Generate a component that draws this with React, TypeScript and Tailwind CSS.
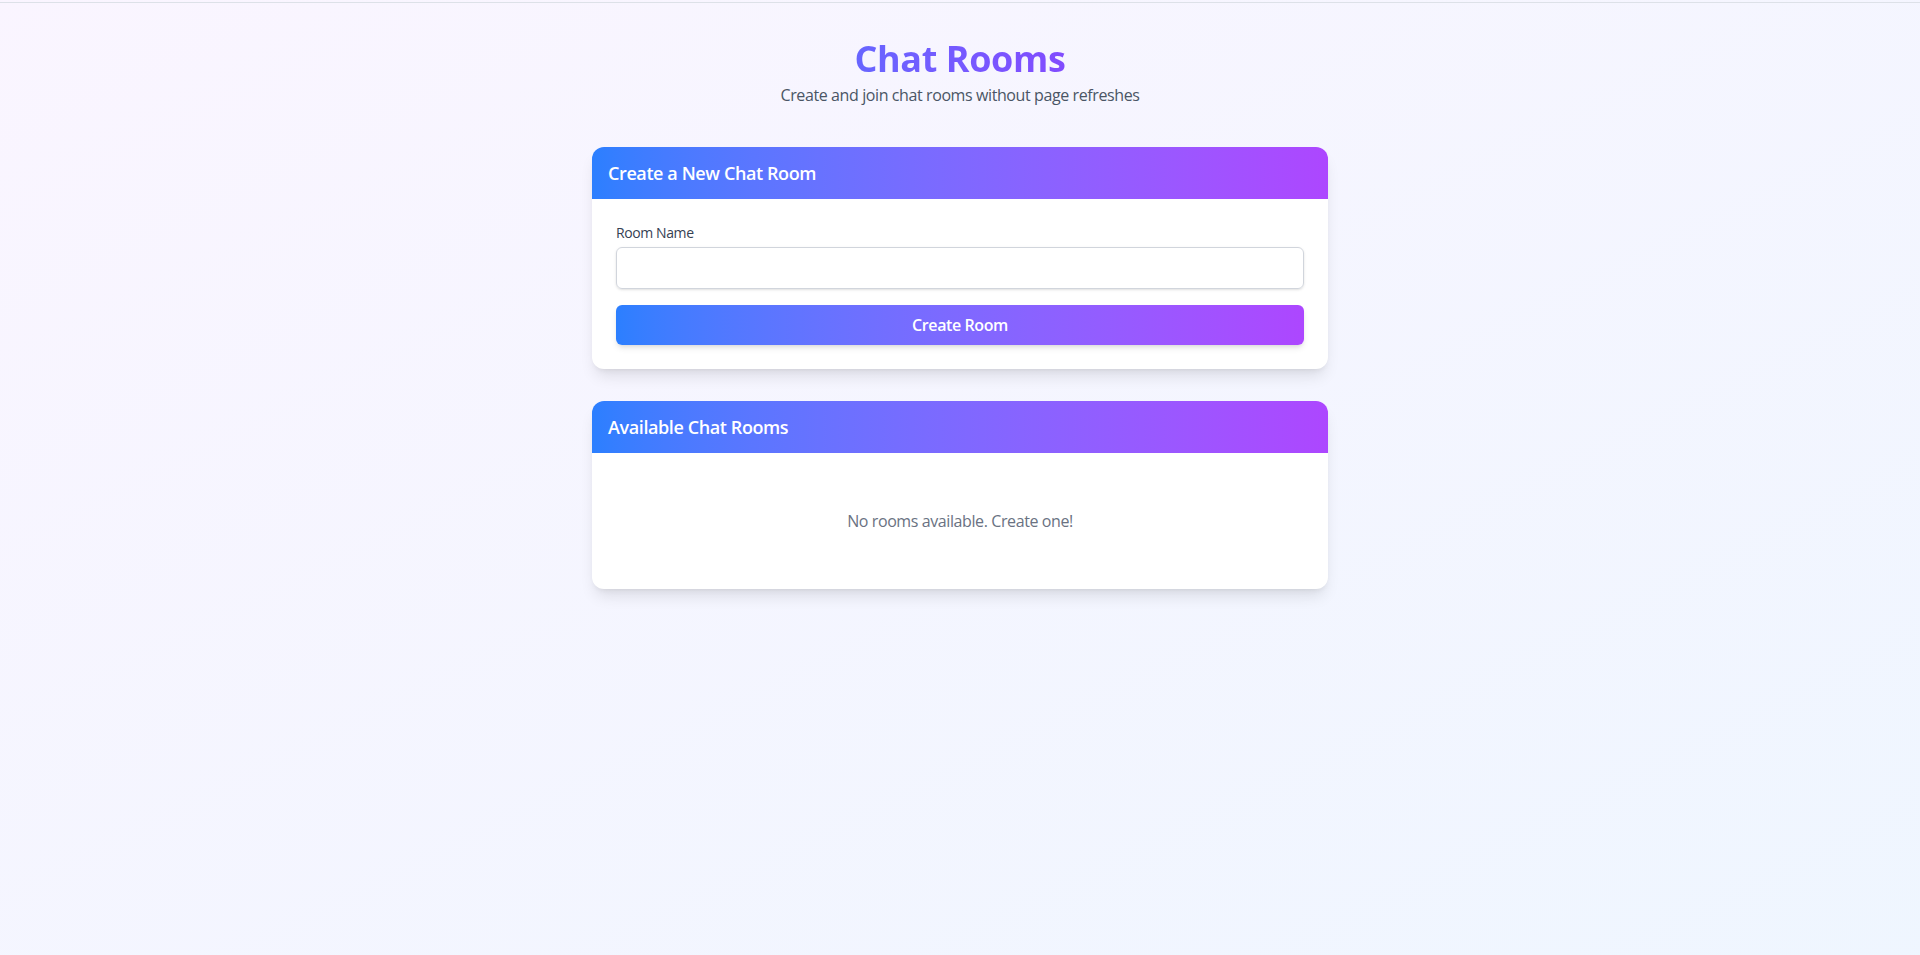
import { useState } from "react";

const font = { fontFamily: '"Segoe UI", "Open Sans", "Noto Sans", sans-serif' };

const Card = ({ title, children }: { title: string; children: React.ReactNode }) => {
    return (
        <div className="bg-white rounded-xl shadow-lg overflow-hidden">
            <div className="bg-gradient-to-r from-blue-500 to-purple-500 px-4 py-3">
                <h2 className="text-lg font-semibold text-white">{title}</h2>
            </div>
            <div className="p-6">{children}</div>
        </div>
    );
};

export default function App() {
    const [roomName, setRoomName] = useState("");

    return (
        <div className="min-h-screen bg-gradient-to-br from-purple-50 to-blue-50 tracking-tight" style={font}>
            <div className="h-[2px]" />
            <div className="h-px bg-[#dde1e8]" />
            <div className="max-w-3xl mx-auto px-4 pt-[36px] pb-8">
                <div className="text-center mb-10">
                    <h1 className="text-4xl font-bold bg-gradient-to-r from-blue-500 to-purple-600 bg-clip-text text-transparent mb-1">
                        Chat Rooms
                    </h1>
                    <p className="text-gray-600">Create and join chat rooms without page refreshes</p>
                </div>

                <div className="flex flex-col gap-8">
                    <Card title="Create a New Chat Room">
                        <label className="block text-sm font-medium text-gray-700 mb-1">Room Name</label>
                        <input
                            type="text"
                            value={roomName}
                            onChange={(e) => setRoomName(e.target.value)}
                            className="w-full px-3 py-2 border border-gray-300 rounded-md shadow-sm outline-none"
                        />
                        <button className="w-full mt-4 py-2 rounded-md bg-gradient-to-r from-blue-500 to-purple-500 text-white font-semibold shadow-md">
                            Create Room
                        </button>
                    </Card>

                    <Card title="Available Chat Rooms">
                        <div className="py-8 text-center text-gray-500">No rooms available. Create one!</div>
                    </Card>
                </div>
            </div>
        </div>
    );
}
